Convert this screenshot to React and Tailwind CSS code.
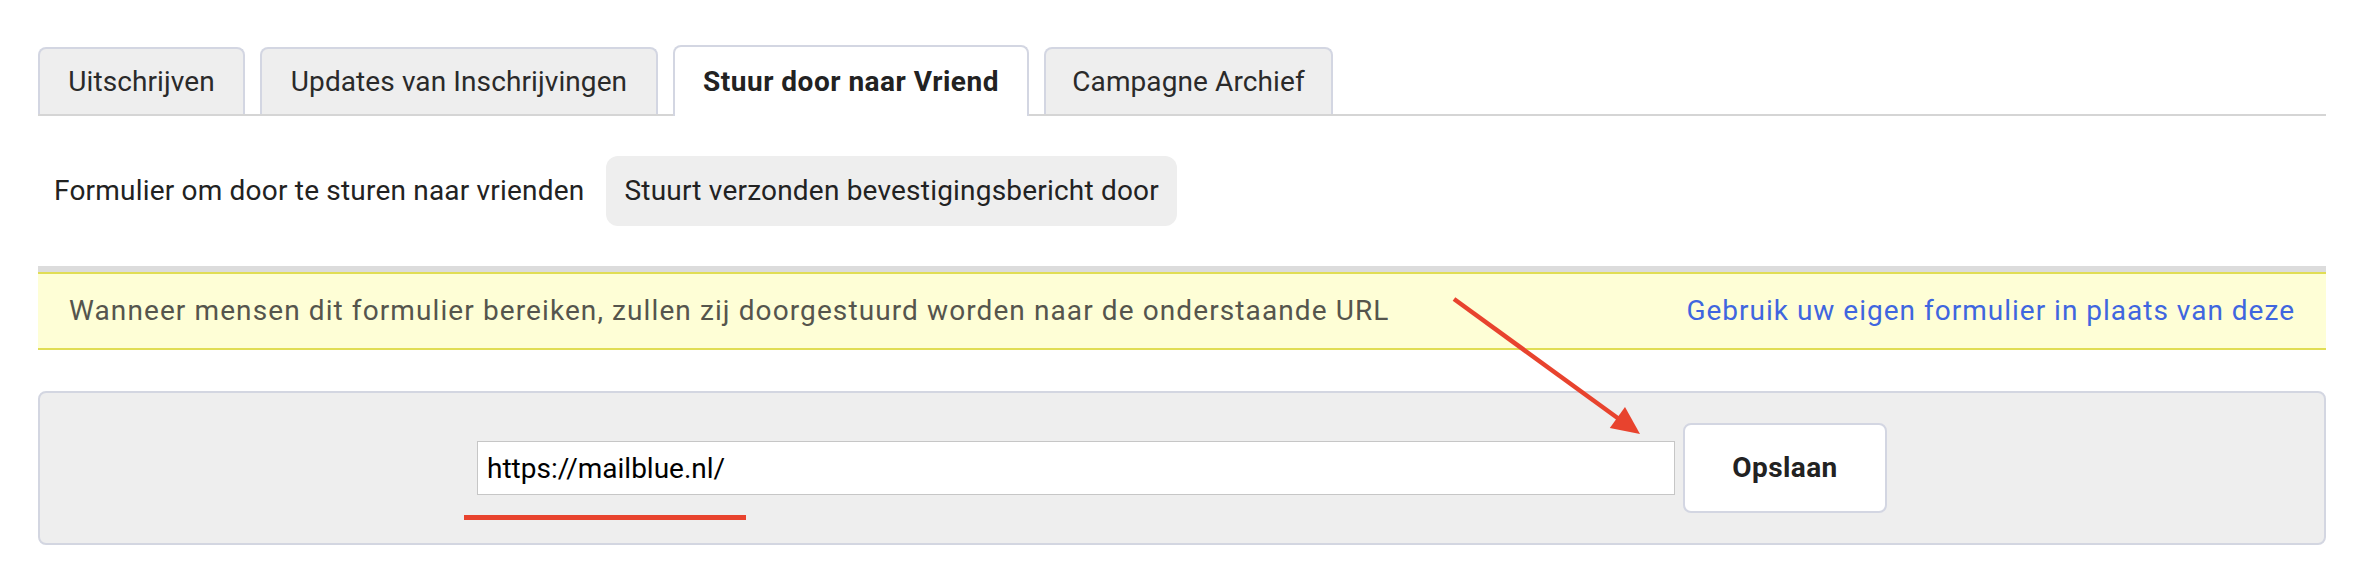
import React from 'react';

const tabs = [
  { label: 'Uitschrijven', w: 'w-[207px]' },
  { label: 'Updates van Inschrijvingen', w: 'w-[398px]' },
  { label: 'Stuur door naar Vriend', w: 'w-[356px]', active: true },
  { label: 'Campagne Archief', w: 'w-[289px]' },
];

function Tabs() {
  return (
    <div className="flex items-end gap-[15px] border-b-2 border-[#d5d5d5] h-[69px]">
      {tabs.map((t) =>
        t.active ? (
          <div
            key={t.label}
            className={`${t.w} h-[71px] -mb-[2px] flex items-center justify-center rounded-t-lg border-2 border-b-0 border-[#d3d6e2] bg-white text-[28px] font-bold tracking-[0.5px] text-[#222]`}
          >
            {t.label}
          </div>
        ) : (
          <div
            key={t.label}
            className={`${t.w} h-[67px] flex items-center justify-center rounded-t-lg border-2 border-b-0 border-[#d3d6e2] bg-[#eeeeee] text-[28px] tracking-[0.1px] text-[#2a2a2a]`}
          >
            {t.label}
          </div>
        )
      )}
    </div>
  );
}

function Annotations() {
  return (
    <svg className="absolute inset-0 pointer-events-none" width="2362" height="576" viewBox="0 0 2362 576">
      <line x1="1454" y1="299" x2="1619" y2="419" stroke="#e8432e" strokeWidth="4.5" />
      <polygon points="1640,434 1609.8,428.1 1625,407.1" fill="#e8432e" />
      <rect x="464" y="515" width="282" height="5" fill="#e8432e" />
    </svg>
  );
}

export default function App() {
  return (
    <div className="relative w-full h-[576px] bg-white font-['Roboto',sans-serif]">
      <div className="pt-[47px] pl-[38px] pr-[36px]">
        <Tabs />

        {/* sub navigation */}
        <div className="mt-[40px] flex items-center gap-[22px] pl-[16px] text-[28px] tracking-[0.2px] text-[#222]">
          <span>Formulier om door te sturen naar vrienden</span>
          <div className="h-[70px] flex items-center px-[18px] rounded-[12px] bg-[#eeeeee]">
            Stuurt verzonden bevestigingsbericht door
          </div>
        </div>

        {/* notice */}
        <div className="mt-[40px] border-t-[6px] border-[#dcdcdc]">
          <div className="h-[78px] flex items-center justify-between px-[31px] border-y-2 border-[#e0dd55] bg-[#fefed6] text-[28px]">
            <span className="text-[#55554d] tracking-[1.1px]">
              Wanneer mensen dit formulier bereiken, zullen zij doorgestuurd worden naar de onderstaande URL
            </span>
            <a className="text-[#3f66df] tracking-[1px]">Gebruik uw eigen formulier in plaats van deze</a>
          </div>
        </div>

        {/* url form */}
        <div className="mt-[41px] h-[154px] flex items-center justify-center gap-[8px] rounded-lg border-2 border-[#d3d6e1] bg-[#eeeeee]">
          <input
            readOnly
            value="https://mailblue.nl/"
            className="w-[1198px] h-[54px] px-[9px] border border-[#c6c6c6] bg-white text-[28px] text-black outline-none"
          />
          <button className="w-[204px] h-[90px] rounded-lg border-2 border-[#d3d6e2] bg-white text-[28px] font-bold tracking-[0.4px] text-[#222]">
            Opslaan
          </button>
        </div>
      </div>
      <Annotations />
    </div>
  );
}
